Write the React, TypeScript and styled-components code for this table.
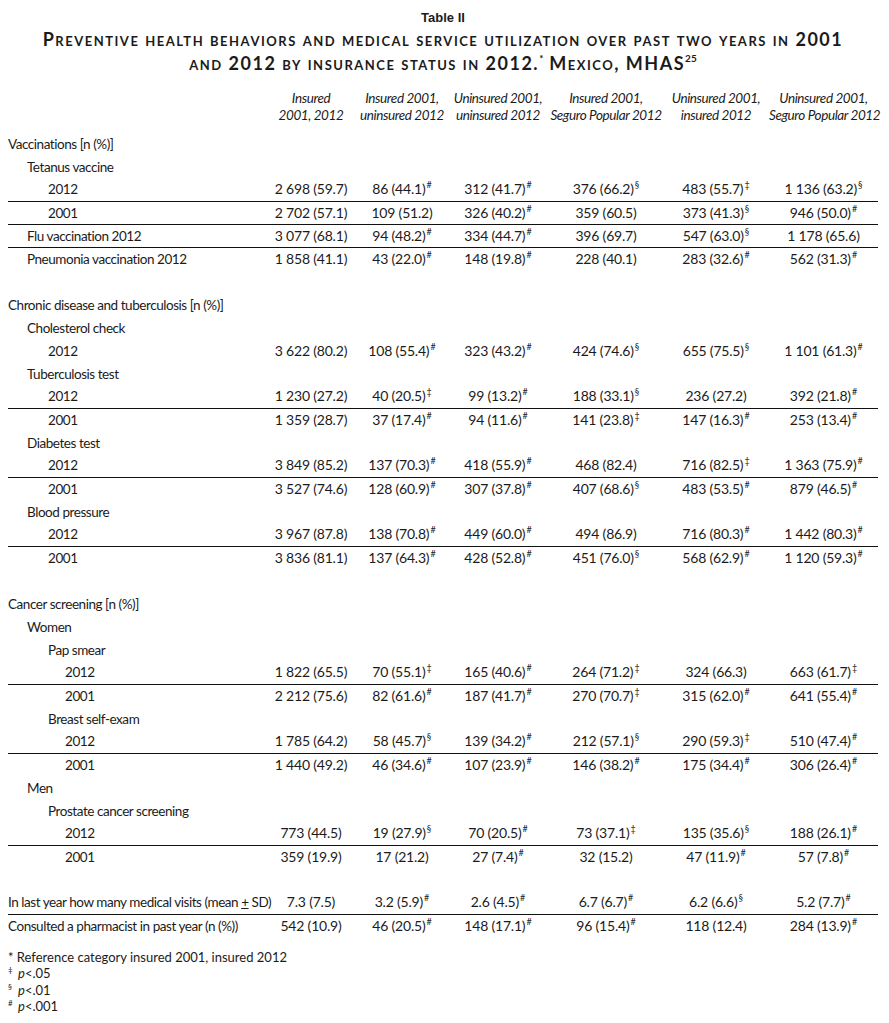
import { Fragment } from "react";
import styled, { createGlobalStyle } from "styled-components";

const GlobalStyle = createGlobalStyle`
  html, body {
    margin: 0;
    background: #ffffff;
  }
  body {
    padding: 8px;
    color: #1b1b1b;
    font-family: Lato, "Open Sans", sans-serif;
  }
`;

const Page = styled.div`
  width: 870px;
  display: flex;
  flex-direction: column;
`;

const TableNumber = styled.div`
  margin-top: 1px;
  text-align: center;
  font-family: "Liberation Sans", Arial, sans-serif;
  font-weight: 700;
  font-size: 13px;
  line-height: 18px;
`;

const TableTitle = styled.h1`
  margin: 0;
  text-align: center;
  font-family: Lato, sans-serif;
  font-weight: 700;
  font-size: 18px;
  line-height: 24px;
  font-variant: small-caps;
  letter-spacing: 1.5px;
  white-space: nowrap;
`;

const Sup = styled.sup`
  font-size: 9px;
  line-height: 0;
  vertical-align: 6px;
  font-variant: normal;
  font-weight: 400;
  letter-spacing: 0;
  margin-left: 1px;
`;

const TitleSup = styled(Sup)`
  font-size: 10px;
  font-weight: 700;
  vertical-align: 8px;
  margin-left: 0;
`;

const Grid = styled.table`
  margin-top: 15px;
  width: 870px;
  border-collapse: collapse;
  table-layout: fixed;
  font-size: 14px;
`;

const HeadCell = styled.th`
  padding: 0 0 8px;
  font-weight: 400;
  font-style: italic;
  font-size: 13.5px;
  line-height: 17px;
  letter-spacing: -0.4px;
  text-align: center;
  vertical-align: bottom;
  white-space: nowrap;
`;

const Row = styled.tr<{ $rule?: boolean }>`
  height: 23px;
  border-bottom: ${(p) => (p.$rule ? "1px solid #111" : "none")};
`;

const LabelCell = styled.td<{ $level: number }>`
  padding: 0 0 0 ${(p) => [0, 19, 40, 57][p.$level]}px;
  white-space: nowrap;
  font-size: 13.5px;
  line-height: 22px;
  letter-spacing: -0.45px;
`;

const ValueCell = styled.td`
  padding: 0;
  text-align: center;
  white-space: nowrap;
  line-height: 22px;
  letter-spacing: -0.2px;
`;

const Plus = styled.span`
  text-decoration: underline;
`;

const Notes = styled.div`
  margin-top: 12px;
  font-size: 13px;
  line-height: 16.3px;
`;

const Note = styled.div`
  height: 16.3px;
  display: flex;
  align-items: baseline;
`;

const Mark = styled.span`
  width: 10px;
  font-size: 8px;
  line-height: 0;
  position: relative;
  top: -5px;
`;

const P = styled.i`
  font-style: italic;
`;

type Line = {
  label?: React.ReactNode;
  level?: number;
  values?: string[];
  rule?: boolean;
};

const columns = [
  ["Insured", "2001, 2012"],
  ["Insured 2001,", "uninsured 2012"],
  ["Uninsured 2001,", "uninsured 2012"],
  ["Insured 2001,", "Seguro Popular 2012"],
  ["Uninsured 2001,", "insured 2012"],
  ["Uninsured 2001,", "Seguro Popular 2012"],
];

const widths = [257, 92, 90, 102, 114, 106, 109];

const v = (s: string) => s.split("|").map((x) => x.trim());

const lines: Line[] = [
  { label: "Vaccinations [n (%)]", level: 0 },
  { label: "Tetanus vaccine", level: 1 },
  { label: "2012", level: 2, rule: true, values: v("2 698 (59.7) | 86 (44.1)# | 312 (41.7)# | 376 (66.2)§ | 483 (55.7)‡ | 1 136 (63.2)§") },
  { label: "2001", level: 2, rule: true, values: v("2 702 (57.1) | 109 (51.2) | 326 (40.2)# | 359 (60.5) | 373 (41.3)§ | 946 (50.0)#") },
  { label: "Flu vaccination 2012", level: 1, rule: true, values: v("3 077 (68.1) | 94 (48.2)# | 334 (44.7)# | 396 (69.7) | 547 (63.0)§ | 1 178 (65.6)") },
  { label: "Pneumonia vaccination 2012", level: 1, values: v("1 858 (41.1) | 43 (22.0)# | 148 (19.8)# | 228 (40.1) | 283 (32.6)# | 562 (31.3)#") },
  {},
  { label: "Chronic disease and tuberculosis [n (%)]", level: 0 },
  { label: "Cholesterol check", level: 1 },
  { label: "2012", level: 2, values: v("3 622 (80.2) | 108 (55.4)# | 323 (43.2)# | 424 (74.6)§ | 655 (75.5)§ | 1 101 (61.3)#") },
  { label: "Tuberculosis test", level: 1 },
  { label: "2012", level: 2, rule: true, values: v("1 230 (27.2) | 40 (20.5)‡ | 99 (13.2)# | 188 (33.1)§ | 236 (27.2) | 392 (21.8)#") },
  { label: "2001", level: 2, values: v("1 359 (28.7) | 37 (17.4)# | 94 (11.6)# | 141 (23.8)‡ | 147 (16.3)# | 253 (13.4)#") },
  { label: "Diabetes test", level: 1 },
  { label: "2012", level: 2, rule: true, values: v("3 849 (85.2) | 137 (70.3)# | 418 (55.9)# | 468 (82.4) | 716 (82.5)‡ | 1 363 (75.9)#") },
  { label: "2001", level: 2, values: v("3 527 (74.6) | 128 (60.9)# | 307 (37.8)# | 407 (68.6)§ | 483 (53.5)# | 879 (46.5)#") },
  { label: "Blood pressure", level: 1 },
  { label: "2012", level: 2, rule: true, values: v("3 967 (87.8) | 138 (70.8)# | 449 (60.0)# | 494 (86.9) | 716 (80.3)# | 1 442 (80.3)#") },
  { label: "2001", level: 2, values: v("3 836 (81.1) | 137 (64.3)# | 428 (52.8)# | 451 (76.0)§ | 568 (62.9)# | 1 120 (59.3)#") },
  {},
  { label: "Cancer screening [n (%)]", level: 0 },
  { label: "Women", level: 1 },
  { label: "Pap smear", level: 2 },
  { label: "2012", level: 3, rule: true, values: v("1 822 (65.5) | 70 (55.1)‡ | 165 (40.6)# | 264 (71.2)‡ | 324 (66.3) | 663 (61.7)‡") },
  { label: "2001", level: 3, values: v("2 212 (75.6) | 82 (61.6)# | 187 (41.7)# | 270 (70.7)‡ | 315 (62.0)# | 641 (55.4)#") },
  { label: "Breast self-exam", level: 2 },
  { label: "2012", level: 3, rule: true, values: v("1 785 (64.2) | 58 (45.7)§ | 139 (34.2)# | 212 (57.1)§ | 290 (59.3)‡ | 510 (47.4)#") },
  { label: "2001", level: 3, values: v("1 440 (49.2) | 46 (34.6)# | 107 (23.9)# | 146 (38.2)# | 175 (34.4)# | 306 (26.4)#") },
  { label: "Men", level: 1 },
  { label: "Prostate cancer screening", level: 2 },
  { label: "2012", level: 3, rule: true, values: v("773 (44.5) | 19 (27.9)§ | 70 (20.5)# | 73 (37.1)‡ | 135 (35.6)§ | 188 (26.1)#") },
  { label: "2001", level: 3, values: v("359 (19.9) | 17 (21.2) | 27 (7.4)# | 32 (15.2) | 47 (11.9)# | 57 (7.8)#") },
  {},
  {
    label: (
      <>
        In last year how many medical visits (mean <Plus>+</Plus> SD)
      </>
    ),
    level: 0,
    rule: true,
    values: v("7.3 (7.5) | 3.2 (5.9)# | 2.6 (4.5)# | 6.7 (6.7)# | 6.2 (6.6)§ | 5.2 (7.7)#"),
  },
  { label: "Consulted a pharmacist in past year (n (%))", level: 0, values: v("542 (10.9) | 46 (20.5)# | 148 (17.1)# | 96 (15.4)# | 118 (12.4) | 284 (13.9)#") },
];

const Value = ({ text }: { text: string }) => {
  const last = text.slice(-1);
  if ("‡§#".includes(last)) {
    return (
      <>
        {text.slice(0, -1)}
        <Sup>{last}</Sup>
      </>
    );
  }
  return <>{text}</>;
};

export default function App() {
  return (
    <Page>
      <GlobalStyle />
      <TableNumber>Table II</TableNumber>
      <TableTitle>
        Preventive health behaviors and medical service utilization over past two years in 2001
        <br />
        and 2012 by insurance status in 2012.<TitleSup>*</TitleSup> Mexico, MHAS<TitleSup>25</TitleSup>
      </TableTitle>

      <Grid>
        <colgroup>
          {widths.map((w, i) => (
            <col key={i} style={{ width: w }} />
          ))}
        </colgroup>
        <thead>
          <tr>
            <HeadCell />
            {columns.map(([a, b], i) => (
              <HeadCell key={i}>
                {a}
                <br />
                {b}
              </HeadCell>
            ))}
          </tr>
        </thead>
        <tbody>
          {lines.map((line, i) => (
            <Row key={i} $rule={line.rule}>
              <LabelCell $level={line.level ?? 0}>{line.label}</LabelCell>
              {columns.map((_, j) => (
                <ValueCell key={j}>
                  {line.values ? <Value text={line.values[j]} /> : null}
                </ValueCell>
              ))}
            </Row>
          ))}
        </tbody>
      </Grid>

      <Notes>
        <Note>* Reference category insured 2001, insured 2012</Note>
        {[
          ["‡", ".05"],
          ["§", ".01"],
          ["#", ".001"],
        ].map(([m, p]) => (
          <Fragment key={m}>
            <Note>
              <Mark>{m}</Mark>
              <P>p</P>&lt;{p}
            </Note>
          </Fragment>
        ))}
      </Notes>
    </Page>
  );
}
